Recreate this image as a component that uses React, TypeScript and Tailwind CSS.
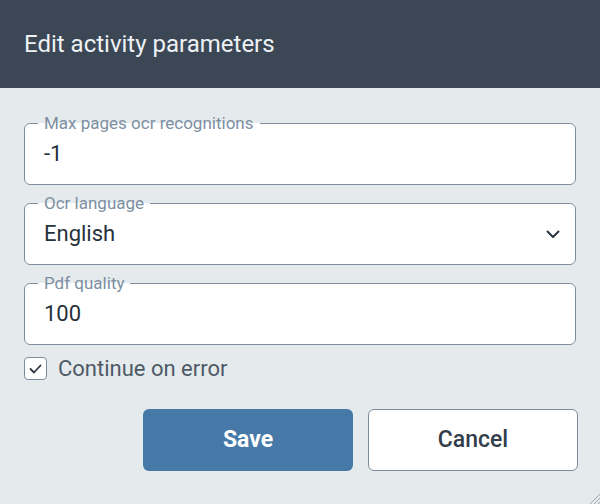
import React from "react";

function Field({ label, value, select }: { label: string; value: string; select?: boolean }) {
  return (
    <fieldset className="bg-white rounded-[6px] border border-[#7d8c9c] pl-[19px] pr-[14px] m-0 min-w-0">
      <legend className="ml-[-6px] px-[6px] text-[17px] leading-[20px] text-[#7d8fa2]">{label}</legend>
      <div className="flex items-center justify-between h-[40px] mb-[11px] text-[22px] text-[#27313b]">
        <span>{value}</span>
        {select && (
          <svg width="14" height="9" viewBox="0 0 14 9" className="mr-[1px] mt-[2px]">
            <path d="M1.5 1.5 L7 7 L12.5 1.5" fill="none" stroke="#2c3642" strokeWidth="2" strokeLinecap="round" strokeLinejoin="round" />
          </svg>
        )}
      </div>
    </fieldset>
  );
}

export default function App() {
  return (
    <div className="w-[600px] h-[504px] bg-[#e5eaed] relative overflow-hidden" style={{ fontFamily: "Roboto, 'Liberation Sans', sans-serif" }}>
      <div className="h-[88px] bg-[#3b4754] flex items-center px-[24px]">
        <h1 className="text-[24px] leading-[28px] text-[#eef1f4] font-normal mt-[-1px]">Edit activity parameters</h1>
      </div>
      <div className="pt-[25px] pl-[24px] pr-[24px] flex flex-col">
        <Field label="Max pages ocr recognitions" value="-1" />
        <div className="h-[8px]" />
        <Field label="Ocr language" value="English" select />
        <div className="h-[8px]" />
        <Field label="Pdf quality" value="100" />
        <div className="flex items-center h-[23px] mt-[12px] gap-[11px]">
          <div className="w-[23px] h-[23px] rounded-[4px] border border-[#7d8c9c] bg-white flex items-center justify-center">
            <svg width="13" height="10" viewBox="0 0 13 10">
              <path d="M1.5 5 L5 8.5 L11.5 1.5" fill="none" stroke="#2c3642" strokeWidth="1.8" strokeLinecap="round" strokeLinejoin="round" />
            </svg>
          </div>
          <span className="text-[22px] leading-[26px] text-[#4d5966]">Continue on error</span>
        </div>
        <div className="flex justify-end gap-[15px] mt-[29px] mr-[-2px]">
          <button className="w-[210px] h-[62px] rounded-[6px] bg-[#4679a8] text-white text-[23px] font-bold">Save</button>
          <button className="w-[210px] h-[62px] rounded-[6px] bg-white border border-[#7d8c9c] text-[#333e4a] text-[23px] font-medium">Cancel</button>
        </div>
      </div>
      <svg className="absolute right-0 bottom-0" width="12" height="12" viewBox="0 0 12 12">
        <path d="M12 2 L2 12 M12 6 L6 12 M12 10 L10 12" stroke="#9aa5b0" strokeWidth="1" />
      </svg>
    </div>
  );
}
